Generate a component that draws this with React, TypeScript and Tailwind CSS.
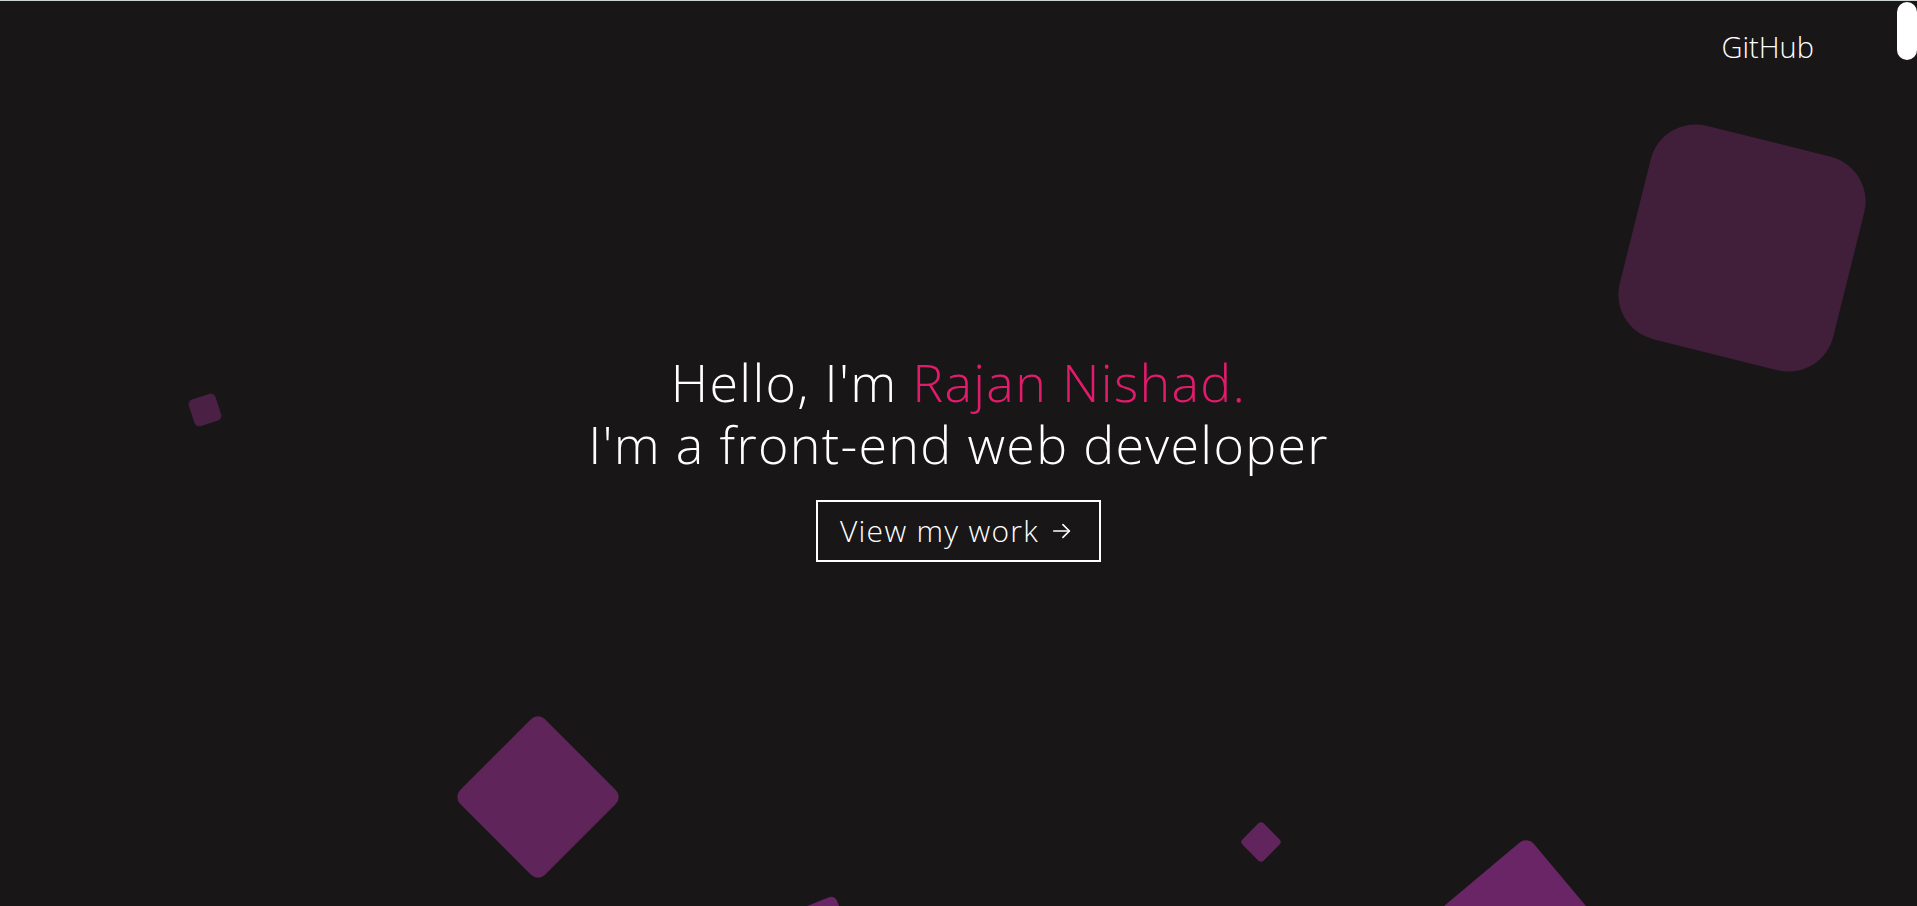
import React from "react";

export default function App() {
  return (
    <div
      className="relative w-full h-[906px] overflow-hidden bg-[#181617] text-white"
      style={{ fontFamily: "'Open Sans', Lato, sans-serif" }}
    >
      {/* top hairline */}
      <div className="absolute top-0 left-0 right-0 h-px bg-[#cfd6d2]" />

      {/* background shapes */}
      <div className="absolute left-[1632px] top-[138px] w-[220px] h-[220px] rounded-[46px] bg-[#411f3b] rotate-[14deg]" />
      <div className="absolute left-[191px] top-[396px] w-[28px] h-[28px] rounded-[5px] bg-[#4a2045] -rotate-[18deg] blur-[0.5px]" />
      <div className="absolute left-[478px] top-[737px] w-[120px] h-[120px] rounded-[10px] bg-[#5f2459] rotate-45" />
      <div className="absolute left-[1246px] top-[827px] w-[30px] h-[30px] rounded-[4px] bg-[#62245c] rotate-45" />
      <div className="absolute left-[1415px] top-[877px] w-[200px] h-[200px] rounded-[10px] bg-[#6a2567] rotate-[50deg]" />
      <div className="absolute left-[788px] top-[904px] w-[60px] h-[60px] rounded-[6px] bg-[#6a2567] rotate-[68deg]" />

      {/* nav */}
      <nav className="absolute top-[29px] right-[103px]">
        <a className="text-[29px] leading-[36px] font-light text-white">GitHub</a>
      </nav>

      {/* scrollbar thumb */}
      <div className="absolute top-[2px] right-0 w-[20px] h-[58px] rounded-[10px] bg-white" />

      {/* hero */}
      <div className="relative flex h-full w-full flex-col items-center justify-center pt-[6px]">
        <h1 className="flex flex-col items-center text-center text-[52px] leading-[62px] font-light tracking-[1.3px]">
          <span>
            Hello, I'm <span className="text-[#e31b6d]">Rajan Nishad.</span>
          </span>
          <span>I'm a front-end web developer</span>
        </h1>
        <button className="mt-[25px] flex h-[62px] w-[285px] items-center justify-center gap-3 border-2 border-white pr-1 text-[30px] font-light tracking-[1.3px] text-white">
          <span>View my work</span>
          <svg width="22" height="22" viewBox="0 0 24 24" fill="none" stroke="white" strokeWidth="1.8" strokeLinecap="round" strokeLinejoin="round">
            <path d="M3 12h17" />
            <path d="M13 5l7 7-7 7" />
          </svg>
        </button>
      </div>
    </div>
  );
}
